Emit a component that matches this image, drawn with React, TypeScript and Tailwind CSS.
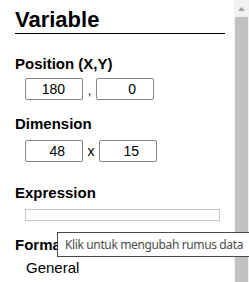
import React from "react";

const arial = { fontFamily: '"Liberation Sans", Arial, sans-serif' };

function Field({ value }: { value: string }) {
  return (
    <div className="w-[58px] h-[22px] border border-[#858585] rounded-[2px] bg-white flex items-center justify-end pr-[17px] text-[14px] text-black leading-none">
      {value}
    </div>
  );
}

export default function App() {
  return (
    <div
      className="relative w-[249px] h-[282px] overflow-hidden bg-white flex"
      style={arial}
    >
      <div className="w-[234px] pl-[15px] flex flex-col">
        <div className="mt-[7px] w-[210px] h-[27px] border-b border-black text-[22px] leading-[26px] font-bold text-black">
          Variable
        </div>
        <div className="mt-[21px] text-[15px] leading-[17px] font-bold text-black">
          Position (X,Y)
        </div>
        <div className="mt-[6px] ml-[10px] flex items-end">
          <Field value="180" />
          <span className="w-[13px] text-center text-[13px] leading-[18px] text-black">,</span>
          <Field value="0" />
        </div>
        <div className="mt-[15px] text-[15px] leading-[17px] font-bold text-black">
          Dimension
        </div>
        <div className="mt-[8px] ml-[10px] flex items-center">
          <Field value="48" />
          <span className="w-[16px] text-center text-[14px] leading-[18px] text-black">x</span>
          <Field value="15" />
        </div>
        <div className="mt-[22px] text-[15px] leading-[17px] font-bold text-black">
          Expression
        </div>
        <div className="mt-[8px] ml-[10px] w-[195px] h-[12px] border border-[#c6c6c6] bg-white" />
        <div className="mt-[15px] text-[15px] leading-[17px] font-bold text-black">
          Format
        </div>
        <div className="mt-[6px] ml-[11px] text-[15px] leading-[17px] text-black">
          General
        </div>
      </div>
      <div className="w-[15px] h-full bg-[#f1f1f1] flex flex-col">
        <div className="h-[17px] flex items-center justify-center">
          <svg width="7" height="4" viewBox="0 0 7 4">
            <polygon points="0,4 7,4 3.5,0" fill="#a3a3a3" />
          </svg>
        </div>
        <div className="mx-[1px] flex-1 bg-[#c1c1c1]" />
      </div>
      <div
        className="absolute left-[57px] top-[232px] w-[200px] h-[25px] border border-[#4a4a4a] bg-white pl-[7px] flex items-center text-[12px] tracking-[-0.37px] text-[#4d4d4d] whitespace-nowrap"
        style={{ fontFamily: '"Noto Sans", "Open Sans", sans-serif' }}
      >
        Klik untuk mengubah rumus data
      </div>
    </div>
  );
}
